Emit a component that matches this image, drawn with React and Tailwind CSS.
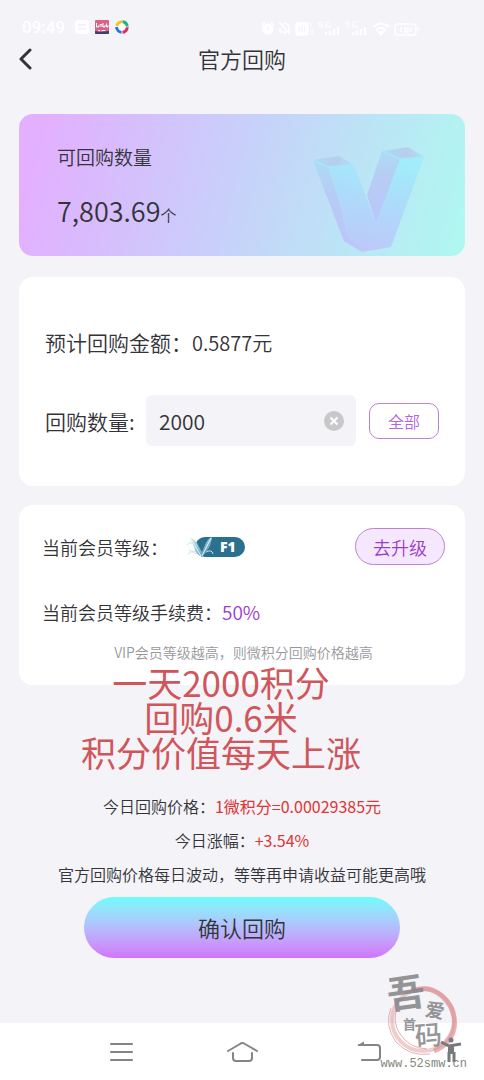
import React, { useState } from "react";

function StatusBar() {
  return (
    <div className="flex h-10 items-end justify-between pr-16 pl-[22px] pb-[3px] text-white">
      <div className="flex items-center gap-1.5">
        <span className="w-[47px] font-['Roboto',sans-serif] text-[17px] leading-5 font-medium">09:49</span>
        <svg width="14" height="14" viewBox="0 0 14 14" aria-hidden="true">
          <rect width="14" height="14" rx="3" fill="#fff" />
          <path d="M3 5h8M3 8.500h8" stroke="#f0f0f5" strokeWidth="1.500" />
        </svg>
        <svg width="14" height="14" viewBox="0 0 14 14" aria-hidden="true">
          <rect width="14" height="14" rx="1" fill="#dd5f83" />
          <path d="M0 11l5 1 9-1v2a1 1 0 0 1-1 1H1a1 1 0 0 1-1-1z" fill="#39426e" />
          <path d="M1.500 3v4h2V5.500M5 7V4.500h2V7M8 3v4h2V5M11.500 3.500V7h1.500V5" stroke="#fff" strokeWidth="1" fill="none" />
          <path d="M3 10.500h2M6.500 10.500h4" stroke="#fff" strokeWidth="1.200" />
        </svg>
        <svg width="14" height="14" viewBox="0 0 14 14" fill="none" strokeWidth="3" aria-hidden="true">
          <path d="M1.800 6A5.200 5.200 0 0 1 7 1.700" stroke="#f4c425" />
          <path d="M7.500 1.700A5.200 5.200 0 0 1 12.200 6.500" stroke="#20b37c" />
          <path d="M12.200 7.300A5.200 5.200 0 0 1 7.500 12.300" stroke="#e52858" />
          <path d="M6.500 12.300A5.200 5.200 0 0 1 1.700 7" stroke="#2877d8" />
          <path d="M7 3L11 7 7 11 3 7z" fill="#fff" />
        </svg>
      </div>
      <svg width="160" height="18" viewBox="0 0 160 18" fill="none" stroke="#fff" strokeWidth="1.500" aria-hidden="true">
        <circle cx="8" cy="10" r="5" fill="#fff" />
        <path d="M2 6l3-3M14 6l-3-3" />
        <path d="M8 7v3h2" stroke="#f3f3f8" strokeWidth="1" />
        <path d="M20 13h9V8a4 4 0 0 0-7-2M20 13V9M19 3l11 12M24 15h2" />
        <rect x="36" y="4" width="12" height="12" rx="2" fill="#fff" />
        <path d="M39 7v6M42 7v6M39 10h3M44.500 7v6" stroke="#f3f3f8" strokeWidth="1" />
        <path d="M51 4v4M50 11h3v4h-3" strokeWidth="1" />
        <path d="M63 3h-4v2h3v3h-3M70 3h-4v5h4V6M90 3h-4v2h3v3h-3M97 3h-4v5h4V6" strokeWidth="1.200" />
        <path d="M66 16v-3M70 16v-4M74 16v-6M78 16V8M93 16v-3M97 16v-4M101 16v-6M105 16V8" strokeWidth="2.500" />
        <path d="M113 8q8-7 16 0M116 11q5-4 10 0" strokeWidth="2" />
        <path d="M118 12.500h6l-3 3.500z" fill="#fff" />
        <rect x="135" y="5" width="21" height="11" rx="3" />
        <path d="M158.500 9v3M141 8v5M145 8v5h3v-3h-3M151 8v5" />
      </svg>
    </div>
  );
}

function VLetter() {
  return (
    <svg width="115" height="109" viewBox="0 0 115 109" className="shrink-0" aria-hidden="true">
      <defs>
        <linearGradient id="vFront" x1="0.700" y1="0" x2="0.450" y2="1">
          <stop offset="0" stopColor="#a0eefb" />
          <stop offset="0.450" stopColor="#acdcfa" />
          <stop offset="1" stopColor="#bec8fa" />
        </linearGradient>
        <linearGradient id="vSide" x1="0" y1="0" x2="0" y2="1">
          <stop offset="0" stopColor="#addcf6" />
          <stop offset="0.350" stopColor="#b6cdf4" />
          <stop offset="1" stopColor="#bbc5fa" />
        </linearGradient>
        <linearGradient id="vTop" x1="0" y1="0" x2="1" y2="0">
          <stop offset="0" stopColor="#a9dcf3" />
          <stop offset="0.600" stopColor="#b9cdee" />
          <stop offset="1" stopColor="#abe3f5" />
        </linearGradient>
      </defs>
      <path d="M3 15L18 22L52 107L34 96z" fill="url(#vSide)" />
      <path d="M72 6L92 14L66 78L57 50z" fill="url(#vSide)" />
      <path d="M18 22L44 20L66 78L90 14L114 12L81 102L52 107L32 84z" fill="url(#vFront)" />
      <path d="M3 15L18 22L30 60L38 98L34 96z" fill="url(#vSide)" />
      <path d="M3 15L29 11L44 20L18 22z" fill="url(#vTop)" />
      <path d="M72 6L98 2L114 12L90 14z" fill="url(#vTop)" />
      <path d="M3 15L18 22L44 20M72 6L90 14L114 12" fill="none" stroke="#a6eafb" strokeWidth="2" opacity="0.600" />
    </svg>
  );
}

function LevelBadge() {
  return (
    <svg width="60" height="22" viewBox="0 0 60 22" role="img" aria-label="F1">
      <defs>
        <linearGradient id="wing" x1="0" y1="0" x2="1" y2="1">
          <stop offset="0" stopColor="#d9f2f6" />
          <stop offset="0.500" stopColor="#8dbdd0" />
          <stop offset="1" stopColor="#3c7fa0" />
        </linearGradient>
      </defs>
      <rect x="9" y="1" width="50" height="20" rx="10" fill="#2b718f" />
      <path d="M1 9q2-3 5-2M2 18q7-6 12 1M3 14l8 4M20 16q6-3 7 2" fill="none" stroke="#c8e5ec" strokeWidth="1" />
      <path d="M4 2q6 1 9 9l3 5 3-7q3-7 7-8-1 9-5 14l-5 6q-6-3-8-10z" fill="url(#wing)" />
      <path d="M5 3l10 17M25 2l-9 18" fill="none" stroke="#e2f6fa" strokeWidth="1" />
      <text x="34" y="16" fill="#fff" fontFamily="Open Sans, sans-serif" fontWeight="800" fontSize="14">F1</text>
    </svg>
  );
}

function Watermark() {
  return (
    <div className="pointer-events-none absolute right-[17px] bottom-[8px] flex w-[88px] flex-col items-end">
      <svg width="100" height="100" viewBox="-12 0 100 100" className="-mb-3 shrink-0 overflow-visible" aria-hidden="true">
        <g fill="none" stroke="#dc8d90">
          <circle cx="44" cy="52" r="31" strokeWidth="4" opacity="0.450" />
          <path d="M34 23q15-7 29 5 15 13 12 33-4 16-20 22" strokeWidth="5" opacity="0.650" />
          <path d="M12 40q-7 17 5 34 14 15 34 12M18 40q-5 14 3 26 9 14 27 15" strokeWidth="1" opacity="0.700" />
        </g>
        <g fill="#848487" fontFamily="Noto Sans CJK SC, sans-serif" fontWeight="700" opacity="0.850">
          <text x="8" y="39" fontSize="38" transform="rotate(-8 26 26)">吾</text>
          <text x="24" y="61" fontSize="13">首</text>
          <text x="46" y="49" fontSize="19" transform="rotate(10 55 46)">爱</text>
          <text x="36" y="77" fontSize="27" fontWeight="500" transform="rotate(-5 50 70)">码</text>
        </g>
        <g fill="none" stroke="#77797d" strokeWidth="3">
          <circle cx="72" cy="72" r="2.500" fill="#77797d" stroke="none" />
          <path d="M62 74l8 4 12-2M70 84v10M75 84v10" />
          <path d="M72 77v9" strokeWidth="6" />
        </g>
      </svg>
      <span className="font-['Liberation_Mono',monospace] text-xs leading-4 text-[#85887b]">www.52smw.cn</span>
    </div>
  );
}

function SystemNav() {
  return (
    <nav className="flex h-[57px] items-center justify-between bg-white pr-[103px] pl-[105px]">
      <button aria-label="Menu">
        <svg width="32" height="24" viewBox="0 0 32 24" fill="none" stroke="#858585" strokeWidth="2" strokeLinecap="round">
          <path d="M6 4h21M6 12h21M6 20h21" />
        </svg>
      </button>
      <button aria-label="Home">
        <svg width="32" height="24" viewBox="0 0 32 24" fill="none" stroke="#858585" strokeWidth="2" strokeLinecap="round" strokeLinejoin="round">
          <path d="M2 11L14 4q2-2 5 0l12 7M7 13v5q0 3 3 3h13q3 0 3-3v-5" />
        </svg>
      </button>
      <button aria-label="Back">
        <svg width="34" height="24" viewBox="0 0 34 24" fill="none" stroke="#858585" strokeWidth="2" strokeLinecap="round">
          <path d="M12 5h18q3 0 3 3v9q0 3-3 3H15" />
          <path d="M10 5.500l7-4v4z" fill="#858585" stroke="none" />
        </svg>
      </button>
    </nav>
  );
}

export default function App() {
  const [amount, setAmount] = useState("2000");

  return (
    <div className="relative flex min-h-screen flex-col bg-[#f3f3f8] font-['Noto_Sans_CJK_SC',sans-serif] font-[350] text-[#333338]">
      <StatusBar />
      <header className="grid h-9 grid-cols-[1fr_auto_1fr] items-center px-[17px]">
        <button aria-label="返回" className="w-6">
          <svg width="20" height="24" viewBox="0 0 20 24" fill="none" stroke="#333338" strokeWidth="3" strokeLinecap="round" strokeLinejoin="round">
            <path d="M13 4l-9 9 9 9" />
          </svg>
        </button>
        <h1 className="text-[22px] leading-8 font-[350]">官方回购</h1>
      </header>

      <main className="flex-1 px-[19px] pt-[38px]">
        <section className="flex items-start justify-between rounded-[14px] bg-[linear-gradient(105deg,#e3afff_5%,#c8d0fa_48%,#b0f7f1_98%)] pt-[31px] pr-10 pl-[38px]">
          <div>
            <h2 className="text-[19px] leading-6 font-[350]">可回购数量</h2>
            <p className="mt-6 text-[27px] leading-9">
              7,803.69<span className="text-[16px]">个</span>
            </p>
          </div>
          <div className="h-[111px]">
            <VLetter />
          </div>
        </section>

        <section className="mt-[21px] rounded-[14px] bg-white px-[26px] pt-[49px] pb-10">
          <p className="text-[21px] leading-8">预计回购金额：<span className="text-[20px]">0.5877元</span></p>
          <div className="mt-9 flex items-center">
            <label htmlFor="amount" className="w-[101px] shrink-0 text-[21px] leading-8">回购数量:</label>
            <div className="flex h-[51px] min-w-0 flex-1 items-center rounded-md bg-[#f3f3f8] pr-3 pl-[13px]">
              <input
                id="amount"
                inputMode="numeric"
                value={amount}
                onChange={(e) => setAmount(e.target.value)}
                className="w-full min-w-0 bg-transparent text-[21px] leading-8 outline-none"
              />
              <button aria-label="清除" onClick={() => setAmount("")} className="shrink-0">
                <svg width="20" height="20" viewBox="0 0 20 20" aria-hidden="true">
                  <circle cx="10" cy="10" r="10" fill="#c8c8ca" />
                  <path d="M6.500 6.500l7 7M13.500 6.500l-7 7" stroke="#fff" strokeWidth="2.200" />
                </svg>
              </button>
            </div>
            <button className="ml-[13px] h-9 w-[70px] shrink-0 rounded-[10px] border border-[#bd83d3] text-[16px] leading-6 text-[#b267e0]">全部</button>
          </div>
        </section>

        <section className="relative mt-[19px] rounded-[14px] bg-white pt-[23px] pr-5 pb-[23px] pl-[23px]">
          <div className="flex items-center">
            <span className="text-[18px] leading-6">当前会员等级：</span>
            <div className="ml-[18px]"><LevelBadge /></div>
            <button className="ml-auto h-[37px] w-[90px] rounded-full border border-[#bd83d3] bg-[#f5e8fe] text-[18px] leading-6 text-[#9c3ccb]">去升级</button>
          </div>
          <p className="mt-[35px] text-[18px] leading-6">
            当前会员等级手续费：<span className="text-[19px] text-[#9c3ccb]">50%</span>
          </p>
          <p className="mt-[18px] text-center text-[14px] leading-5 text-[#98989b]">VIP会员等级越高，则微积分回购价格越高</p>
          <p className="absolute top-[159px] right-0 left-0 -translate-x-[21px] text-center text-[35px] leading-[35px] font-normal whitespace-nowrap text-[#d0565b]">
            一天2000积分<br />回购0.6米<br />积分价值每天上涨
          </p>
        </section>

        <div className="mt-[109px] flex flex-col gap-2.5 text-center text-[16px] leading-6">
          <p>今日回购价格：<span className="font-normal text-[#df3535]">1微积分=0.00029385元</span></p>
          <p>今日涨幅：<span className="font-normal text-[#df3535]">+3.54%</span></p>
          <p>官方回购价格每日波动，等等再申请收益可能更高哦</p>
        </div>
        <div className="mt-[11px] px-[65px]">
          <button className="h-[61px] w-full rounded-full bg-linear-to-b from-[#6cfcfb] to-[#d174fa] pb-0.5 text-[22px] leading-8">确认回购</button>
        </div>
      </main>
      <SystemNav />
      <Watermark />
    </div>
  );
}
